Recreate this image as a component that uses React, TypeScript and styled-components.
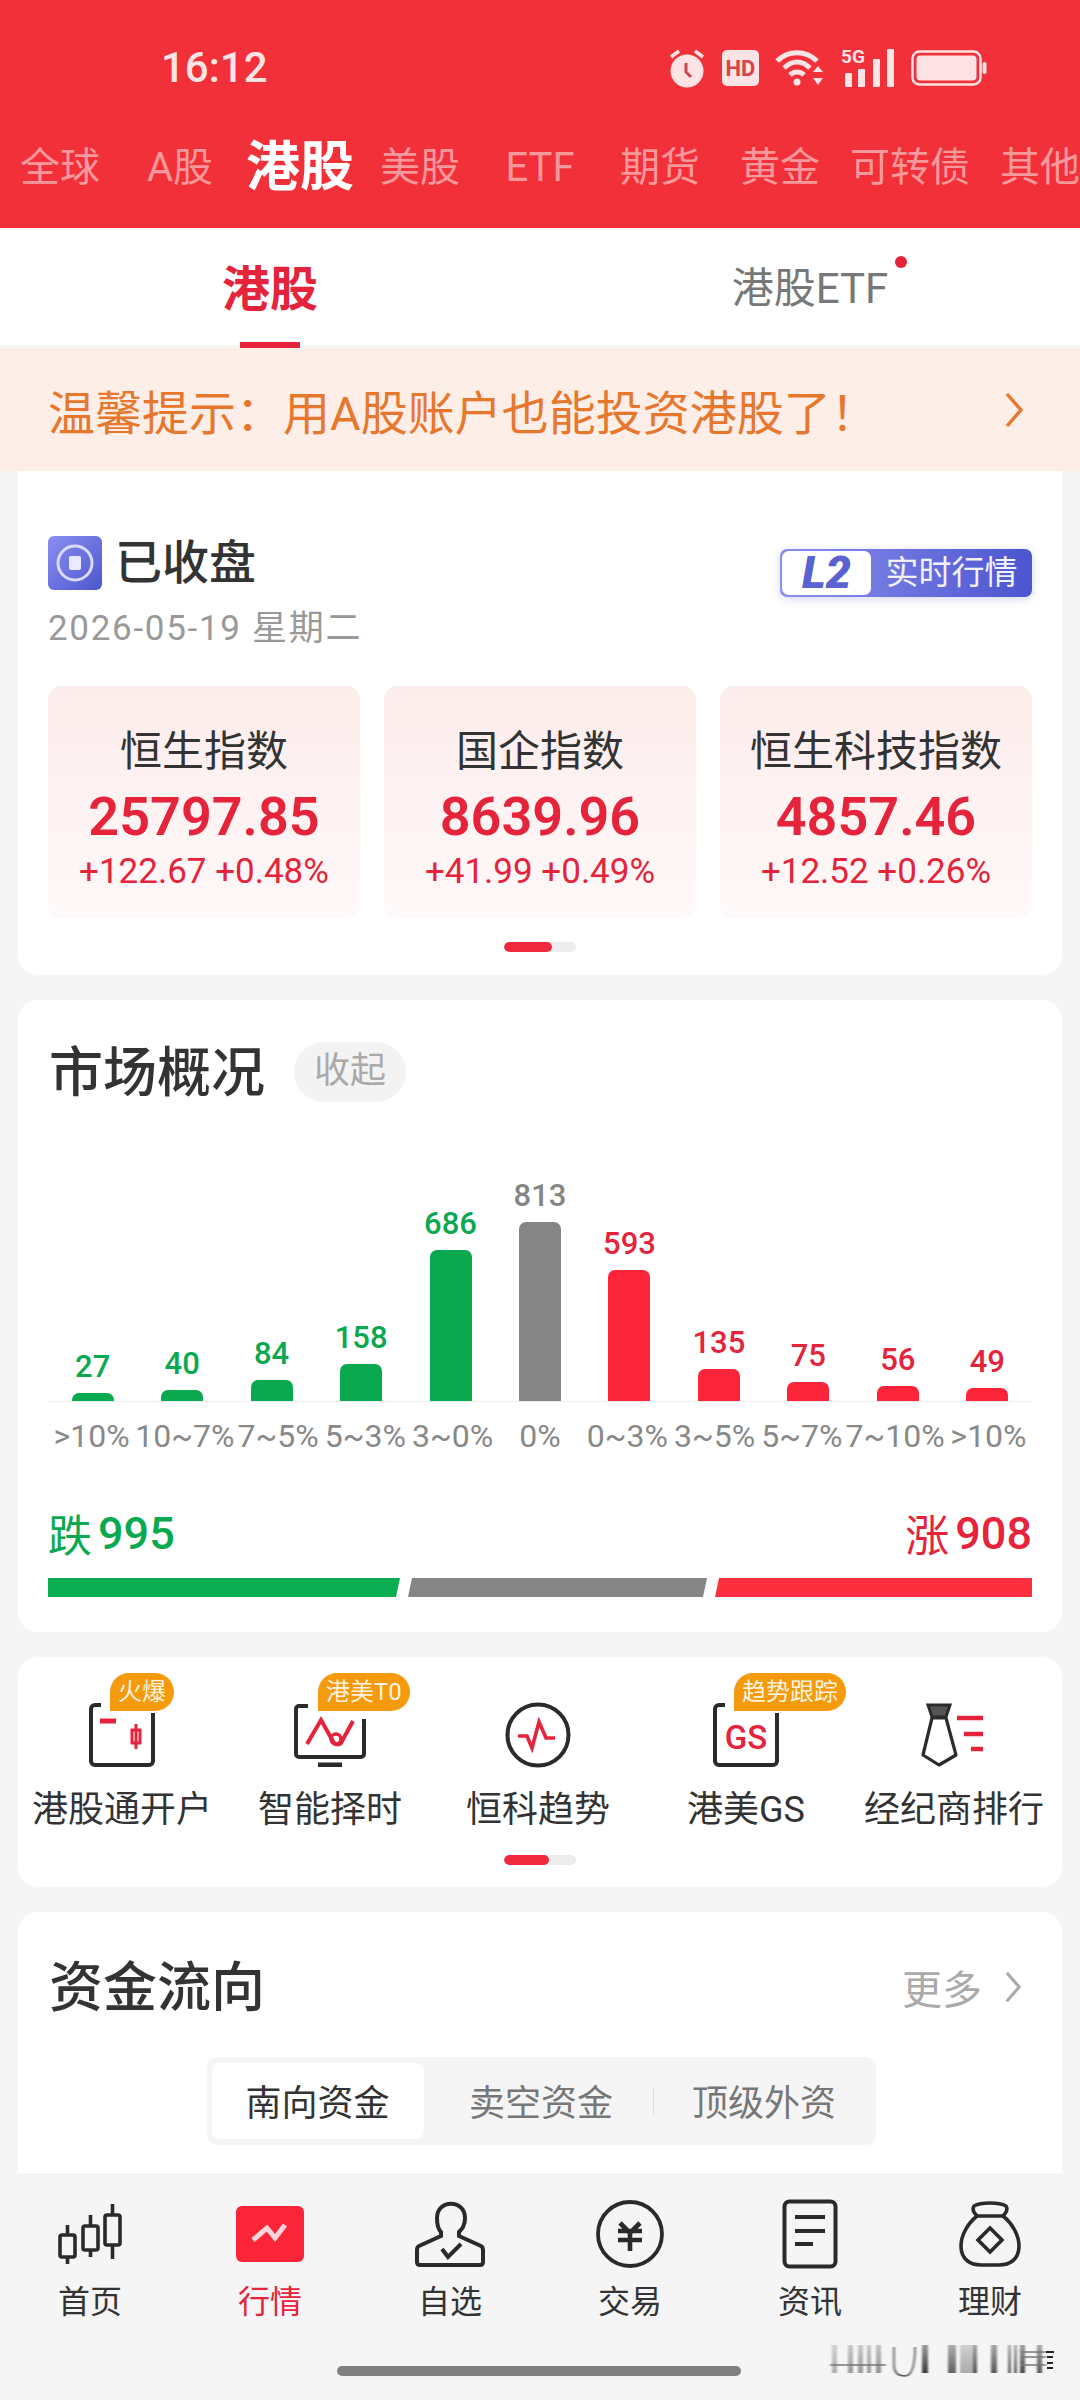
import React from "react";
import styled, { createGlobalStyle } from "styled-components";

const Global = createGlobalStyle`
  html, body { margin: 0; padding: 0; background: #f5f5f5; }
  * { box-sizing: border-box; }
  body { font-family: Roboto, "Noto Sans CJK SC", sans-serif; }
`;

const Page = styled.div`
  width: 1080px; height: 2400px; display: flex; flex-direction: column;
  overflow: hidden; background: #f5f5f5; position: relative;
`;
const Header = styled.header`
  height: 228px; background: #f1303a; display: flex; flex-direction: column; flex: none;
`;
const StatusBar = styled.div`
  height: 136px; display: flex; align-items: center; justify-content: space-between;
  padding: 0 93px 0 161px; color: #fde3e3;
`;
const Time = styled.span`font-size: 42px; font-weight: 500; line-height: 48px;`;
const StatusIcons = styled.div`display: flex; align-items: center; gap: 16px;`;
const MarketTabs = styled.nav`
  height: 92px; display: flex; align-items: flex-start; margin-top: -2px;
`;
const MarketTab = styled.span<{ $active?: boolean; $size: number; $inset?: number }>`
  flex: none; width: ${p => p.$size}px; padding-left: ${p => p.$inset ?? 0}px; text-align: center; white-space: nowrap;
  line-height: 68px;
  font-size: ${p => (p.$active ? 54 : 40)}px;
  font-weight: ${p => (p.$active ? 700 : 400)};
  color: ${p => (p.$active ? "#fff" : "#f9989a")};
`;
const SubTabs = styled.div`
  height: 120px; background: #fff; display: grid; grid-template-columns: 1fr 1fr; flex: none;
  border-bottom: 3px solid #f6f6f6;
`;
const SubTab = styled.div<{ $active?: boolean }>`
  position: relative; display: flex; align-items: center; justify-content: center; padding-bottom: 4px;
  font-size: ${p => (p.$active ? 48 : 42)}px; font-weight: ${p => (p.$active ? 700 : 400)};
  color: ${p => (p.$active ? "#e5243b" : "#777")};
`;
const SubLabel = styled.span`position: relative;`;
const RedDot = styled.i`
  position: absolute; right: -19px; top: 2px; width: 12px; height: 12px; border-radius: 50%; background: #e5243b;
`;
const Underline = styled.i`
  position: absolute; bottom: -3px; left: 50%; margin-left: -30px; width: 60px; height: 6px; background: #e5243b;
`;
const Banner = styled.div`
  height: 123px; background: #fdeee8; flex: none; display: flex; align-items: center; justify-content: space-between;
  padding: 0 56px 0 48px; font-size: 47px; color: #e8772e; white-space: nowrap;
`;
const Main = styled.main`
  flex: 1; min-height: 0; overflow: hidden; padding: 0 18px; display: flex; flex-direction: column; gap: 25px;
`;
const Card = styled.section<{ $flatTop?: boolean }>`
  flex: none; background: #fff;
  border-radius: ${p => (p.$flatTop ? 0 : 20)}px ${p => (p.$flatTop ? 0 : 20)}px 20px 20px;
  padding: 0 30px;
`;
const StatusCard = styled(Card)`padding-top: 65px; padding-bottom: 23px;`;
const HeadRow = styled.div`display: flex; align-items: center; justify-content: space-between; height: 54px;`;
const HeadLeft = styled.div`display: flex; align-items: center; gap: 13px;`;
const CloseTitle = styled.h2`margin: 0; font-size: 47px; font-weight: 500; color: #333; line-height: 54px;`;
const L2Badge = styled.div`
  width: 252px; height: 48px; margin-top: 19px; border-radius: 7px; display: flex; align-items: center; overflow: hidden;
  background: linear-gradient(90deg, #8a90ee, #4d55cf); box-shadow: 0 2px 8px rgba(90,96,210,.25);
`;
const L2Mark = styled.span`
  width: 89px; height: 44px; margin-left: 2px; background: #fff; border-radius: 7px;
  color: #5a62d2; font-style: italic; font-weight: 900; font-size: 45px; line-height: 44px; text-align: center;
`;
const L2Text = styled.span`flex: 1; text-align: center; font-size: 33px; line-height: 48px; color: #f1f1ff; white-space: nowrap;`;
const DateLine = styled.div`margin-top: 17px; font-size: 35px; line-height: 44px; color: #999; letter-spacing: 1.7px;`;
const IndexGrid = styled.div`margin-top: 35px; display: grid; grid-template-columns: repeat(3, 312px); gap: 24px;`;
const IndexCard = styled.div`
  height: 232px; border-radius: 14px; background: linear-gradient(180deg, #fdecec, #fff9f9);
  padding-top: 38px; text-align: center; white-space: nowrap;
`;
const IndexName = styled.div`font-size: 42px; line-height: 56px; color: #333;`;
const IndexValue = styled.div`margin-top: 5px; font-size: 54px; line-height: 64px; color: #e5243b; font-weight: 600;`;
const IndexChange = styled.div`margin-top: 1px; font-size: 35px; line-height: 44px; color: #e5243b;`;
const Dots = styled.div<{ $mt: number }>`
  margin: ${p => p.$mt}px auto 0; width: 72px; height: 10px; background: #ececec; border-radius: 5px; overflow: hidden;
`;
const DotsFill = styled.div<{ $w: number }>`width: ${p => p.$w}px; height: 10px; background: #f02a3e; border-radius: 5px;`;

const OverviewCard = styled(Card)`padding-top: 42px; padding-bottom: 35px;`;
const TitleRow = styled.div`display: flex; align-items: center; gap: 29px; height: 60px;`;
const SectionTitle = styled.h2`
  margin: 4px 0 0 1px; font-size: 54px; line-height: 60px; font-weight: 500; color: #333; white-space: nowrap;
`;
const Pill = styled.span`
  width: 112px; height: 60px; border-radius: 30px; background: #f3f3f3; color: #aaa;
  font-size: 36px; line-height: 58px; text-align: center;
`;
const Chart = styled.div`
  height: 300px; display: grid; grid-template-columns: repeat(11, 1fr); border-bottom: 1px solid #eeeeee;
`;
const Col = styled.div`display: flex; flex-direction: column; align-items: center; justify-content: flex-end;`;
const ColValue = styled.span<{ $c: string }>`
  font-size: 31px; line-height: 36px; margin-bottom: 8px; font-weight: 500; color: ${p => p.$c};
`;
const Bar = styled.div<{ $c: string; $h: number }>`
  width: 42px; height: ${p => p.$h}px; background: ${p => p.$c}; border-radius: 7px 7px 0 0;
`;
const RangeRow = styled.div`margin-top: 14px; display: grid; grid-template-columns: repeat(11, 1fr);`;
const RangeLabel = styled.span`
  display: flex; justify-content: center; white-space: nowrap; font-size: 32px; line-height: 40px; color: #888; width: 100%;
`;
const SummaryRow = styled.div`margin-top: 49px; height: 56px; display: flex; justify-content: space-between; align-items: center;`;
const SummaryItem = styled.span<{ $c: string }>`
  display: flex; align-items: center; gap: 6px; color: ${p => p.$c}; font-size: 44px;
`;
const SummaryNum = styled.b`font-size: 45px; font-weight: 500;`;
const Meter = styled.div`margin-top: 17px; height: 19px; display: flex; gap: 8px;`;
const MeterSeg = styled.div<{ $c: string; $w: number; $first?: boolean; $last?: boolean }>`
  width: ${p => p.$w}px; background: ${p => p.$c};
  clip-path: polygon(${p => (p.$first ? "0 0" : "4px 0")}, 100% 0, ${p => (p.$last ? "100% 100%" : "calc(100% - 4px) 100%")}, 0 100%);
`;

const ShortcutCard = styled(Card)`padding: 46px 0 22px;`;
const ShortcutGrid = styled.div`display: grid; grid-template-columns: repeat(5, 208px);`;
const Shortcut = styled.div`position: relative; display: flex; flex-direction: column; align-items: center;`;
const ShortcutIcon = styled.div`height: 64px; display: flex; align-items: center; justify-content: center;`;
const ShortcutLabel = styled.span`margin-top: 19px; font-size: 36px; line-height: 48px; color: #333; white-space: nowrap;`;
const Tag = styled.span`
  position: absolute; top: -30px; left: 92px; height: 38px; padding: 0 8px;
  background: #f59a0c; color: #fff3df; font-size: 24px; line-height: 38px; white-space: nowrap;
  border-radius: 19px 19px 19px 0;
`;

const FundCard = styled(Card)`padding-top: 40px; padding-bottom: 60px;`;
const FundHead = styled.div`display: flex; align-items: center; justify-content: space-between; height: 70px;`;
const More = styled.span`display: flex; align-items: center; gap: 22px; font-size: 40px; color: #aaa; padding-right: 10px;`;
const SegWrap = styled.div`margin-top: 35px; display: flex; justify-content: center;`;
const Seg = styled.div`
  width: 669px; height: 88px; background: #f5f5f5; border-radius: 10px; padding: 6px 5px;
  display: flex; align-items: stretch; margin-left: 2px;
`;
const SegItem = styled.span<{ $active?: boolean; $w: number; $inset?: number }>`
  flex: none; width: ${p => p.$w}px; padding-left: ${p => p.$inset ?? 0}px; display: flex; align-items: center; justify-content: center;
  font-size: 36px; border-radius: 8px; white-space: nowrap; padding-bottom: 3px;
  color: ${p => (p.$active ? "#333" : "#777")}; background: ${p => (p.$active ? "#fff" : "transparent")};
`;
const SegDivider = styled.i`flex: none; width: 1px; height: 28px; background: #ddd; align-self: center;`;

const BottomNav = styled.nav`
  height: 227px; flex: none; background: #f5f5f5; display: grid; grid-template-columns: repeat(6, 1fr);
  padding-top: 26px; position: relative;
`;
const NavItem = styled.div`display: flex; flex-direction: column; align-items: center;`;
const NavIcon = styled.div`height: 70px; display: flex; align-items: center; justify-content: center;`;
const NavLabel = styled.span<{ $active?: boolean }>`
  margin-top: 11px; font-size: 32px; line-height: 44px; color: ${p => (p.$active ? "#e5243b" : "#333")};
`;
const HomeBar = styled.i`
  position: absolute; left: 337px; top: 193px; width: 404px; height: 10px; background: #808080; border-radius: 5px;
`;
const Watermark = styled.svg`position: absolute; left: 820px; top: 162px;`;

const Chevron = ({ c, h }: { c: string; h: number }) => (
  <svg width={h / 2 + 2} height={h} viewBox="0 0 18 36" fill="none">
    <path d="M2 2 L16 18 L2 34" stroke={c} strokeWidth="3.4" />
  </svg>
);

const S = "#fde3e3";
const Alarm = () => (
  <svg width="38" height="40" viewBox="0 0 38 40">
    <circle cx="19" cy="23" r="16.5" fill={S} />
    <path d="M3 9 L11 3 M35 9 L27 3" stroke={S} strokeWidth="3.5" />
    <path d="M18 15 V24 L23 29" stroke="#c94b52" strokeWidth="3" fill="none" />
  </svg>
);
const HD = () => (
  <svg width="37" height="36" viewBox="0 0 37 36">
    <rect width="37" height="36" rx="5" fill={S} />
    <text x="18.5" y="26" textAnchor="middle" fontSize="22" fontWeight="700" fill="#d8424a" fontFamily="Roboto">HD</text>
  </svg>
);
const Wifi = () => (
  <svg width="50" height="40" viewBox="0 0 50 40" fill="none">
    <path d="M2 13 C13 2 31 2 42 13" stroke={S} strokeWidth="5" />
    <path d="M9 20 C17 12 27 12 35 20" stroke={S} strokeWidth="5" />
    <path d="M15 27 C19 23 25 23 29 27" stroke={S} strokeWidth="5" />
    <circle cx="22" cy="34" r="3.5" fill={S} />
    <path d="M38 24 L43 18 L48 24Z M38 30 L48 30 L43 37Z" fill={S} />
  </svg>
);
const Signal = () => (
  <svg width="54" height="40" viewBox="0 0 54 40">
    <text x="0" y="15" fontSize="19" fontWeight="700" fill={S} fontFamily="Roboto">5G</text>
    <rect x="4" y="25" width="7" height="14" rx="1" fill={S} />
    <rect x="17" y="21" width="7" height="18" rx="1" fill={S} />
    <rect x="32" y="11" width="7" height="28" rx="1" fill={S} />
    <rect x="46" y="1" width="7" height="38" rx="1" fill={S} />
  </svg>
);
const Battery = () => (
  <svg width="76" height="36" viewBox="0 0 76 36">
    <rect x="1.5" y="1.5" width="68" height="33" rx="7" fill="none" stroke={S} strokeWidth="2.5" />
    <rect x="5.5" y="5.5" width="60" height="25" rx="4" fill={S} />
    <rect x="71.5" y="12" width="4" height="12" rx="2" fill={S} />
  </svg>
);
const StopIcon = () => (
  <svg width="54" height="54" viewBox="0 0 54 54">
    <defs>
      <linearGradient id="st" x1="0" y1="0" x2="1" y2="1">
        <stop offset="0" stopColor="#8a8ff0" />
        <stop offset="1" stopColor="#4e56cf" />
      </linearGradient>
    </defs>
    <rect width="54" height="54" rx="6" fill="url(#st)" />
    <circle cx="27" cy="27" r="17" fill="none" stroke="#d9dbfb" strokeWidth="3" />
    <rect x="21" y="20" width="12" height="14" rx="2" fill="#e9eaff" />
  </svg>
);

const K = "#2b2b2b";
const R = "#e5243b";
const IconAccount = () => (
  <svg width="66" height="64" viewBox="0 0 66 64" fill="none">
    <path d="M12 2 H6 a4 4 0 0 0-4 4 V58 a4 4 0 0 0 4 4 H60 a4 4 0 0 0 4-4 V10" stroke={K} strokeWidth="4" />
    <path d="M11 18 H27" stroke={R} strokeWidth="5" />
    <path d="M47 21 V46" stroke={R} strokeWidth="3" />
    <rect x="43" y="27" width="8" height="13" fill="none" stroke={R} strokeWidth="3" />
  </svg>
);
const IconMonitor = () => (
  <svg width="72" height="64" viewBox="0 0 72 64" fill="none">
    <path d="M14 3 H5 a3 3 0 0 0-3 3 V51 a3 3 0 0 0 3 3 H67 a3 3 0 0 0 3-3 V16" stroke={K} strokeWidth="4" />
    <path d="M24 62 H48" stroke={K} strokeWidth="5" />
    <path d="M13 41 L27 17 L40 40 a5 5 0 0 0 7 0 L59 18" stroke={R} strokeWidth="4" />
    <circle cx="42" cy="36" r="5" stroke={R} strokeWidth="3.5" />
  </svg>
);
const IconPulse = () => (
  <svg width="66" height="66" viewBox="0 0 66 66" fill="none">
    <circle cx="33" cy="33" r="30.5" stroke={K} strokeWidth="4" />
    <path d="M13 34 H22 L27 46 L34 20 L41 36 H50" stroke={R} strokeWidth="3.6" />
  </svg>
);
const IconGS = () => (
  <svg width="66" height="64" viewBox="0 0 66 64" fill="none">
    <path d="M12 2 H6 a4 4 0 0 0-4 4 V58 a4 4 0 0 0 4 4 H60 a4 4 0 0 0 4-4 V10" stroke={K} strokeWidth="4" />
    <text x="33" y="46" textAnchor="middle" fontSize="33" fontWeight="500" fill={R} fontFamily="Roboto">GS</text>
  </svg>
);
const IconTie = () => (
  <svg width="66" height="64" viewBox="0 0 66 64" fill="none">
    <path d="M7 2 H29 L25 14 H11 Z" fill="#555" stroke={K} strokeWidth="3" />
    <path d="M11 15 H25 L35 52 L18 62 L2 52 Z" stroke={K} strokeWidth="3.2" strokeLinejoin="round" />
    <path d="M36 15 H62 M43 31 H62 M50 46 H62" stroke={R} strokeWidth="4.5" />
  </svg>
);

const N = "#2a2a2a";
const NavHome = () => (
  <svg width="66" height="64" viewBox="0 0 66 64" fill="none" stroke={N} strokeWidth="3.6">
    <rect x="3" y="33" width="15" height="22" rx="2" />
    <path d="M10.5 23 V33 M10.5 55 V62" />
    <rect x="26" y="24" width="15" height="24" rx="2" />
    <path d="M33.5 13 V24 M33.5 48 V55" />
    <rect x="48" y="13" width="15" height="30" rx="2" />
    <path d="M55.5 2 V13 M55.5 43 V57" />
  </svg>
);
const NavMarket = () => (
  <svg width="68" height="56" viewBox="0 0 68 56">
    <rect width="68" height="56" rx="6" fill="#fc2438" />
    <path d="M17 34 L31 22 L39 32 L49 19" stroke="#fbd5d8" strokeWidth="5" fill="none" />
  </svg>
);
const NavWatch = () => (
  <svg width="70" height="68" viewBox="0 0 70 68" fill="none" stroke={N} strokeWidth="4">
    <path d="M22 18 C22 -1 50 -1 50 18 C50 26 47 29 44 32 V36 L66 46 Q68 47 68 50 V62 Q68 65 65 65 H5 Q2 65 2 62 V50 Q2 47 4 46 L26 36 V32 C23 29 22 26 22 18 Z" />
    <path d="M27 49 L33 57 L46 44" />
  </svg>
);
const NavTrade = () => (
  <svg width="68" height="70" viewBox="0 0 68 70" fill="none" stroke={N} strokeWidth="3.8">
    <circle cx="34" cy="35" r="32" />
    <path d="M24 24 L34 34 L44 24 M34 34 V52 M22 32 H46 M22 41 H46" strokeWidth="4.6" />
  </svg>
);
const NavNews = () => (
  <svg width="56" height="70" viewBox="0 0 56 70" fill="none" stroke={N}>
    <rect x="2.5" y="2.5" width="51" height="65" rx="5" strokeWidth="4" />
    <path d="M13 18 H43 M13 32 H43 M13 45 H31" strokeWidth="4" />
  </svg>
);
const NavWealth = () => (
  <svg width="62" height="68" viewBox="0 0 62 68" fill="none" stroke={N} strokeWidth="3.6">
    <path d="M15 6 C22 2 40 2 47 6 C49 9 47 13 44 16 H18 C15 13 13 9 15 6 Z" />
    <path d="M18 16 C8 24 2 36 2 46 C2 60 12 65 22 65 H40 C50 65 60 60 60 46 C60 36 54 24 44 16" />
    <path d="M31 28 L43 40 L31 52 L19 40 Z" />
  </svg>
);

const tabs = [
  { t: "全球", s: 120 }, { t: "A股", s: 120 }, { t: "港股", s: 120, a: true }, { t: "美股", s: 120 },
  { t: "ETF", s: 120 }, { t: "期货", s: 120 }, { t: "黄金", s: 120 }, { t: "可转债", s: 140 }, { t: "其他", s: 100, i: 20 },
];
const indices = [
  { n: "恒生指数", v: "25797.85", c: "+122.67 +0.48%" },
  { n: "国企指数", v: "8639.96", c: "+41.99 +0.49%" },
  { n: "恒生科技指数", v: "4857.46", c: "+12.52 +0.26%" },
];
const G = "#0aa84f", Y = "#858585", P = "#fc2438", PT = "#e5243b";
const cols = [
  { v: 27, h: 8, c: G, t: G, l: ">10%" },
  { v: 40, h: 11, c: G, t: G, l: "10~7%" },
  { v: 84, h: 21, c: G, t: G, l: "7~5%" },
  { v: 158, h: 37, c: G, t: G, l: "5~3%" },
  { v: 686, h: 151, c: G, t: G, l: "3~0%" },
  { v: 813, h: 179, c: Y, t: Y, l: "0%" },
  { v: 593, h: 131, c: P, t: PT, l: "0~3%" },
  { v: 135, h: 32, c: P, t: PT, l: "3~5%" },
  { v: 75, h: 19, c: P, t: PT, l: "5~7%" },
  { v: 56, h: 15, c: P, t: PT, l: "7~10%" },
  { v: 49, h: 13, c: P, t: PT, l: ">10%" },
];
const shortcuts = [
  { l: "港股通开户", i: <IconAccount />, t: "火爆" },
  { l: "智能择时", i: <IconMonitor />, t: "港美T0" },
  { l: "恒科趋势", i: <IconPulse /> },
  { l: "港美GS", i: <IconGS />, t: "趋势跟踪" },
  { l: "经纪商排行", i: <IconTie /> },
];
const navs = [
  { l: "首页", i: <NavHome /> },
  { l: "行情", i: <NavMarket />, a: true },
  { l: "自选", i: <NavWatch /> },
  { l: "交易", i: <NavTrade /> },
  { l: "资讯", i: <NavNews /> },
  { l: "理财", i: <NavWealth /> },
];
const marks = [
  { x: 12, w: 5, o: 0.4 }, { x: 28, w: 5, o: 0.5 }, { x: 38, w: 5, o: 0.5 }, { x: 47, w: 4, o: 0.5 }, { x: 56, w: 5, o: 0.55 },
  { x: 102, w: 6, o: 1 }, { x: 128, w: 8, o: 0.8 }, { x: 140, w: 17, o: 0.4 }, { x: 153, w: 4, o: 0.8 },
  { x: 171, w: 6, o: 0.85 }, { x: 188, w: 3, o: 0.8 }, { x: 194, w: 3, o: 0.8 }, { x: 200, w: 5, o: 0.95 }, { x: 217, w: 5, o: 0.85 },
];

export default function App() {
  return (
    <Page>
      <Global />
      <Header>
        <StatusBar>
          <Time>16:12</Time>
          <StatusIcons>
            <Alarm /><HD /><Wifi /><Signal /><Battery />
          </StatusIcons>
        </StatusBar>
        <MarketTabs>
          {tabs.map(t => (
            <MarketTab key={t.t} $active={t.a} $size={t.s} $inset={t.i}>{t.t}</MarketTab>
          ))}
        </MarketTabs>
      </Header>
      <SubTabs>
        <SubTab $active>港股<Underline /></SubTab>
        <SubTab><SubLabel>港股ETF<RedDot /></SubLabel></SubTab>
      </SubTabs>
      <Banner>
        <span>温馨提示：用A股账户也能投资港股了！</span>
        <Chevron c="#e8772e" h={36} />
      </Banner>
      <Main>
        <StatusCard $flatTop>
          <HeadRow>
            <HeadLeft><StopIcon /><CloseTitle>已收盘</CloseTitle></HeadLeft>
            <L2Badge><L2Mark>L2</L2Mark><L2Text>实时行情</L2Text></L2Badge>
          </HeadRow>
          <DateLine>2026-05-19 星期二</DateLine>
          <IndexGrid>
            {indices.map(x => (
              <IndexCard key={x.n}>
                <IndexName>{x.n}</IndexName>
                <IndexValue>{x.v}</IndexValue>
                <IndexChange>{x.c}</IndexChange>
              </IndexCard>
            ))}
          </IndexGrid>
          <Dots $mt={24}><DotsFill $w={48} /></Dots>
        </StatusCard>

        <OverviewCard>
          <TitleRow><SectionTitle>市场概况</SectionTitle><Pill>收起</Pill></TitleRow>
          <Chart>
            {cols.map((c, i) => (
              <Col key={i}>
                <ColValue $c={c.t}>{c.v}</ColValue>
                <Bar $c={c.c} $h={c.h} />
              </Col>
            ))}
          </Chart>
          <RangeRow>
            {cols.map((c, i) => <RangeLabel key={i}>{c.l}</RangeLabel>)}
          </RangeRow>
          <SummaryRow>
            <SummaryItem $c={G}>跌<SummaryNum>995</SummaryNum></SummaryItem>
            <SummaryItem $c={PT}>涨<SummaryNum>908</SummaryNum></SummaryItem>
          </SummaryRow>
          <Meter>
            <MeterSeg $c="#0aad52" $w={352} $first />
            <MeterSeg $c={Y} $w={299} />
            <MeterSeg $c="#fb2f3d" $w={317} $last />
          </Meter>
        </OverviewCard>

        <ShortcutCard>
          <ShortcutGrid>
            {shortcuts.map(s => (
              <Shortcut key={s.l}>
                <ShortcutIcon>{s.i}</ShortcutIcon>
                {s.t && <Tag>{s.t}</Tag>}
                <ShortcutLabel>{s.l}</ShortcutLabel>
              </Shortcut>
            ))}
          </ShortcutGrid>
          <Dots $mt={21}><DotsFill $w={45} /></Dots>
        </ShortcutCard>

        <FundCard>
          <FundHead>
            <SectionTitle>资金流向</SectionTitle>
            <More>更多<Chevron c="#aaa" h={32} /></More>
          </FundHead>
          <SegWrap>
            <Seg>
              <SegItem $active $w={212}>南向资金</SegItem>
              <SegItem $w={229} $inset={6}>卖空资金</SegItem>
              <SegDivider />
              <SegItem $w={217} $inset={4}>顶级外资</SegItem>
            </Seg>
          </SegWrap>
        </FundCard>
      </Main>
      <BottomNav>
        {navs.map(n => (
          <NavItem key={n.l}>
            <NavIcon>{n.i}</NavIcon>
            <NavLabel $active={n.a}>{n.l}</NavLabel>
          </NavItem>
        ))}
        <HomeBar />
        <Watermark width="250" height="55" viewBox="0 0 250 55" fill="none">
          <defs>
            <filter id="wb" x="-5%" y="-20%" width="110%" height="140%"><feGaussianBlur stdDeviation="1.3 0.6" /></filter>
            <linearGradient id="wf" x1="0" y1="0" x2="0" y2="1">
              <stop offset="0" stopColor="#9a9a9a" />
              <stop offset="1" stopColor="#3c3c3c" />
            </linearGradient>
          </defs>
          <g filter="url(#wb)">
            {marks.map(m => <rect key={m.x} x={m.x} y="10" width={m.w} height="28" fill="url(#wf)" opacity={m.o} />)}
            <path d="M10 30 H66 M200 17 H226 M200 22 H226 M200 30 H226" stroke="#777" strokeWidth="1.5" />
            <path d="M74 12 V30 Q74 41 85 41 Q95 41 95 12" stroke="#555" strokeWidth="1.6" />
          </g>
          <path d="M226 17 H234 M227 22 H233 M227 28 H233 M227 33 H233" stroke="#222" strokeWidth="2" />
        </Watermark>
      </BottomNav>
    </Page>
  );
}
